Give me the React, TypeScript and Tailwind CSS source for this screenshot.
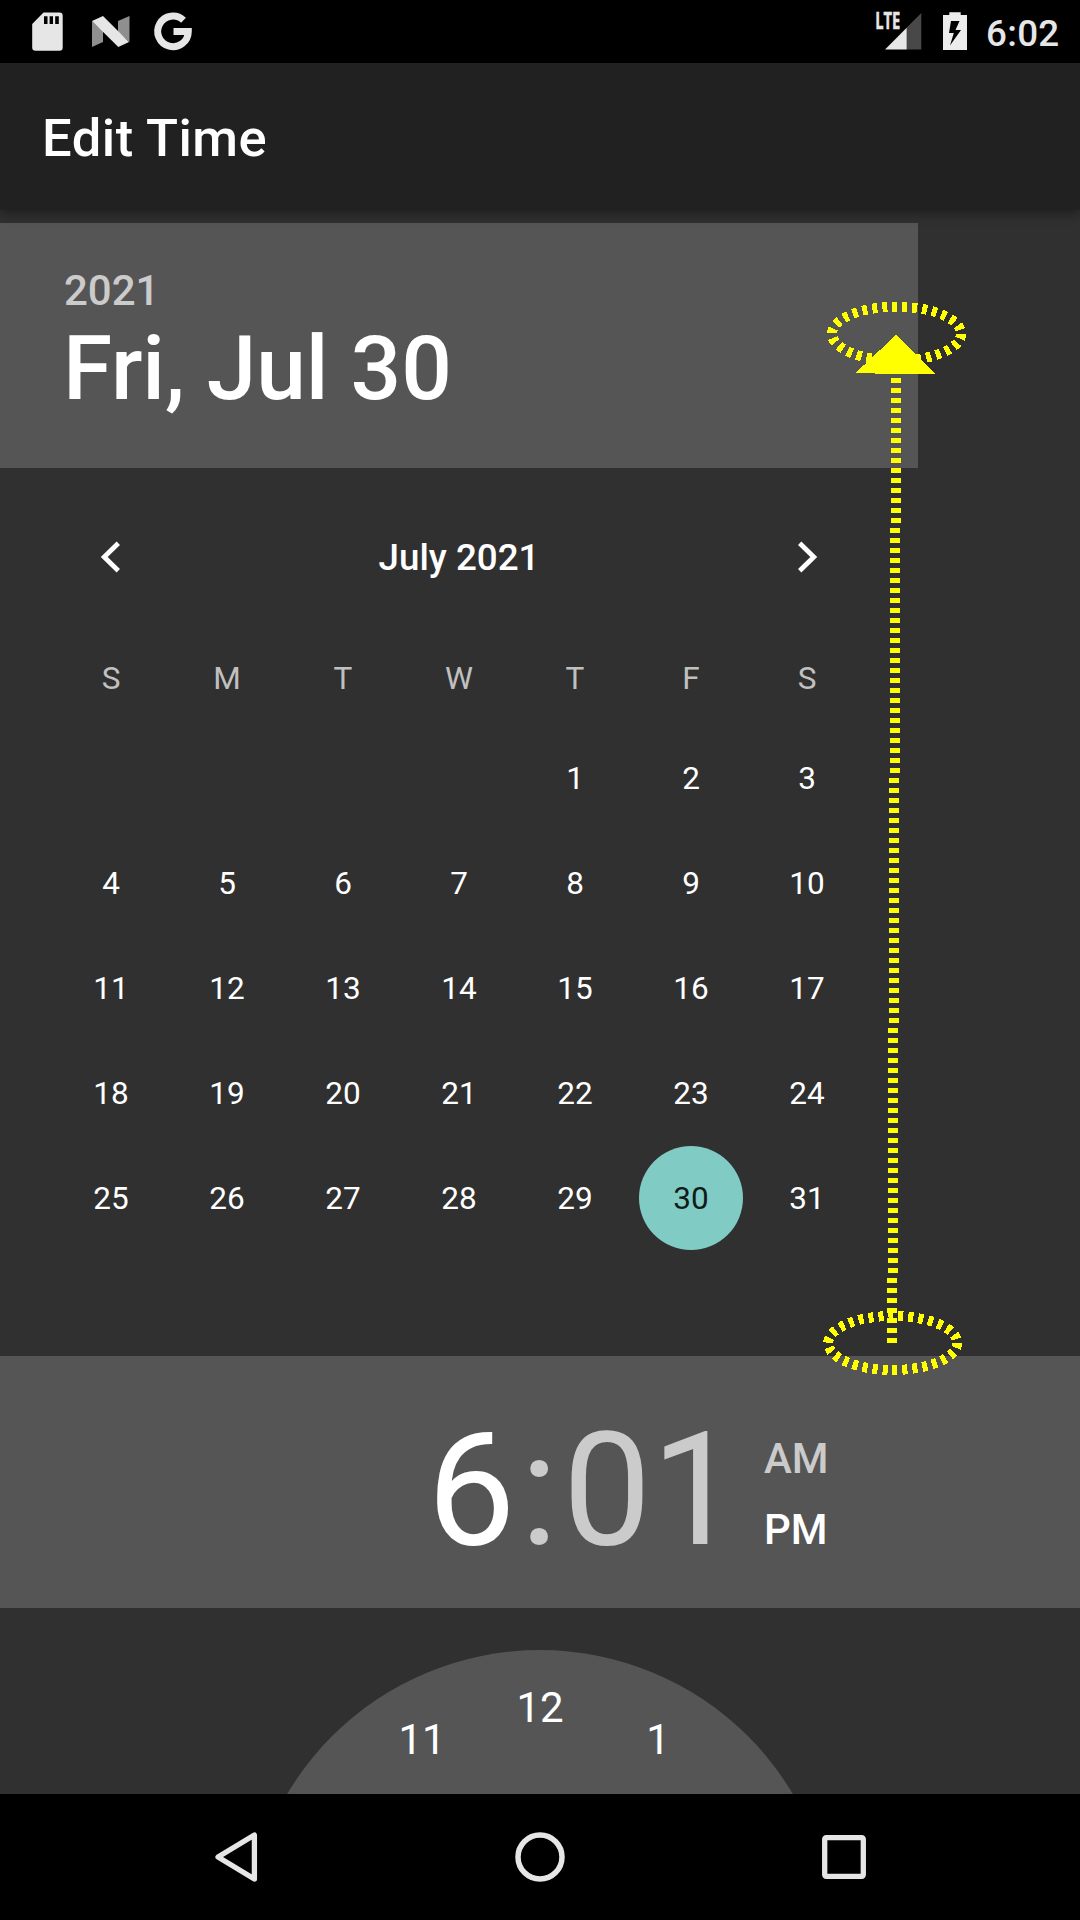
import React from "react";

const WEEKDAYS = ["S", "M", "T", "W", "T", "F", "S"];
const DAYS: (number | null)[] = [null, null, null, null, ...Array.from({ length: 31 }, (_, i) => i + 1)];
const SELECTED_DAY = 30;

function StatusBar() {
  return (
    <header className="flex h-[63px] shrink-0 items-center bg-black text-[#e6e6e6]">
      <svg className="h-[63px] w-[200px]" viewBox="0 0 200 63" fill="#e6e6e6">
        <path
          fillRule="evenodd"
          d="M43.5 12.5H59.5Q62.7 12.5 62.7 15.8V47.5Q62.7 50.7 59.5 50.7H35.5Q32.2 50.7 32.2 47.5V24ZM44 16.3V24H47.5V16.3ZM49.6 16.3V24H53V16.3ZM55.2 16.3V24H58.8V16.3Z"
        />
        <path d="M92 21L103 31V42L92 47ZM118 21L129.500 16V42L118 32Z" fill="#8f8f8f" />
        <path d="M92 21L103 16L129 42L118.300 47Z" />
        <path
          d="M183.500 20.300A15.300 15.300 0 1 0 188.300 31.500H173.500"
          fill="none"
          stroke="#e6e6e6"
          strokeWidth="7"
        />
      </svg>
      <div className="flex-1" />
      <svg className="h-[63px] w-[120px]" viewBox="868 0 120 63">
        <text
          x="875.300"
          y="29"
          fill="#e6e6e6"
          stroke="#e6e6e6"
          strokeWidth="0.500"
          fontFamily="Open Sans"
          fontWeight="700"
          fontSize="22.300"
          textLength="25"
          lengthAdjust="spacingAndGlyphs"
        >
          LTE
        </text>
        <path d="M921.300 13V49.500H906.500V27.800Z" fill="#484848" />
        <path d="M906.700 27.800V49.500H885Z" fill="#e6e6e6" />
        <path
          fillRule="evenodd"
          fill="#ececec"
          d="M949.300 12.300H960.700V15H967V50H943V15H949.300ZM951 21L949 33H953.800L950 45.500L961 30H955.500L959.500 21Z"
        />
      </svg>
      <span className="-ml-[2px] w-[94px] pt-[4px] text-[36.75px] leading-[63px] font-medium tracking-[0.3px]">
        6:02
      </span>
    </header>
  );
}

function DatePicker() {
  return (
    <section className="w-[918px]">
      <div className="flex h-[245px] flex-col bg-[#555555] px-[63px] pt-[43px]">
        <span className="pl-px text-[42px] leading-[50px] font-medium text-[#cbcbcb]">2021</span>
        <span className="text-[89.25px] leading-[106px] font-medium tracking-[-0.12px] whitespace-nowrap">
          Fri, Jul 30
        </span>
      </div>
      <div className="flex h-[180px] items-center px-[90px]">
        <svg className="mb-[2px] size-[42px]" viewBox="0 0 42 42" fill="none" stroke="white" strokeWidth="4.800">
          <path d="M28.300 7.200L14.200 21L28.300 34.800" />
        </svg>
        <span className="flex-1 text-center text-[36.75px] leading-[44px] font-medium">July 2021</span>
        <svg className="mb-[2px] size-[42px]" viewBox="0 0 42 42" fill="none" stroke="white" strokeWidth="4.800">
          <path d="M13.700 7.200L27.800 21L13.700 34.800" />
        </svg>
      </div>
      <div className="grid grid-cols-7 px-[53px] text-center text-[31.5px]">
        {WEEKDAYS.map((day, i) => (
          <span key={i} className="h-[77px] leading-[62px] text-[#c0c0c0]">
            {day}
          </span>
        ))}
        {DAYS.map((day, i) => (
          <div key={i} className="flex h-[105px] items-center justify-center">
            {day === SELECTED_DAY ? (
              <span className="size-[104px] rounded-full bg-[#80cbc4] leading-[106px] text-[#101a19]">{day}</span>
            ) : (
              <span className="h-[104px] leading-[106px]">{day}</span>
            )}
          </div>
        ))}
      </div>
    </section>
  );
}

function TimePicker() {
  return (
    <section className="flex min-h-0 flex-1 flex-col">
      <div className="flex h-[252px] shrink-0 items-center bg-[#555555] pl-[427px]">
        <div className="flex w-[337px] gap-[4.5px] pt-[16px] text-[157.5px] leading-[184px] whitespace-nowrap">
          <span>6</span>
          <span className="text-[#cbcbcb]">:</span>
          <span className="text-[#cbcbcb]">01</span>
        </div>
        <div className="flex flex-col pt-[24px] text-[42px] leading-[71px] font-medium">
          <span className="text-[#cbcbcb]">AM</span>
          <span>PM</span>
        </div>
      </div>
      <div className="flex min-h-0 flex-1 justify-center overflow-hidden pt-[42px]">
        <div className="relative size-[588px] shrink-0 rounded-full bg-[#555555] text-[42px] leading-[50px]">
          <span className="absolute top-[33px] left-[254px] w-[80px] text-center">12</span>
          <span className="absolute top-[65px] left-[136px] w-[80px] text-center">11</span>
          <span className="absolute top-[65px] left-[372px] w-[80px] text-center">1</span>
        </div>
      </div>
    </section>
  );
}

function NavigationBar() {
  return (
    <footer className="flex h-[126px] shrink-0 items-center justify-center gap-[254px] bg-black">
      <svg className="size-[50px]" viewBox="0 0 50 50" fill="none" stroke="#e6e6e6" strokeWidth="5.300">
        <path d="M43.400 3V47L7 25Z" strokeLinejoin="round" />
      </svg>
      <svg className="size-[50px]" viewBox="0 0 50 50" fill="none" stroke="#e6e6e6" strokeWidth="5.500">
        <circle cx="25" cy="25" r="22" />
      </svg>
      <svg className="size-[50px]" viewBox="0 0 50 50" fill="none" stroke="#e6e6e6" strokeWidth="5.300">
        <rect x="5.700" y="5.700" width="38.600" height="38.600" rx="1.500" />
      </svg>
    </footer>
  );
}

function SwipeAnnotation() {
  return (
    <svg
      className="pointer-events-none absolute top-0 left-0 h-[1920px] w-[1080px]"
      viewBox="0 0 1080 1920"
      fill="none"
      stroke="#ffff00"
      strokeWidth="10"
      shapeRendering="crispEdges"
    >
      <ellipse cx="896.500" cy="333.700" rx="64.500" ry="27" strokeDasharray="5 5" />
      <ellipse cx="892.700" cy="1343" rx="64.500" ry="27" strokeDasharray="5 5" />
      <path d="M892.240 1343L896.100 378" strokeDasharray="5 5" />
      <path d="M896 335L935 374H875V373H855.500Z" fill="#ffff00" stroke="none" />
    </svg>
  );
}

export default function App() {
  return (
    <main className="relative flex h-[1920px] w-[1080px] flex-col overflow-hidden bg-[#303030] font-['Roboto',sans-serif] text-white">
      <StatusBar />
      <div className="z-10 flex h-[147px] shrink-0 items-center bg-[#212121] px-[42px] pt-[2px] shadow-[0_4px_10px_rgba(0,0,0,0.35)]">
        <h1 className="text-[52.5px] leading-[62px] font-medium tracking-[0.5px]">Edit Time</h1>
      </div>
      <div className="h-[1146px] shrink-0 pt-[13px]">
        <DatePicker />
      </div>
      <TimePicker />
      <NavigationBar />
      <SwipeAnnotation />
    </main>
  );
}
